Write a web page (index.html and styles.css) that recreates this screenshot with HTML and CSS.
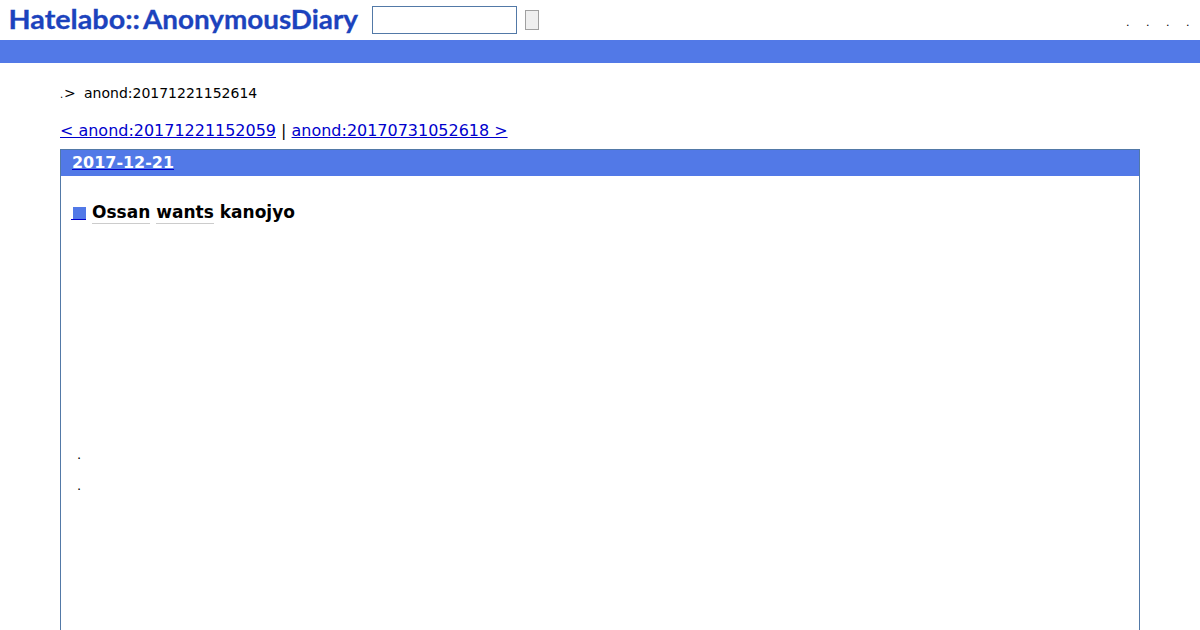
FILE: index.html
```html
<!DOCTYPE html>
<html lang="ja">
<head>
    <meta charset="UTF-8">
    <title>Ossan wants kanojyo</title>
    <link rel="stylesheet" href="styles.css">
</head>
<body>
    <header class="header">
        <a class="logo" href="#">
            <svg width="362" height="40" viewBox="0 0 362 40">
                <text x="8.5" y="28.5" textLength="131.5" lengthAdjust="spacingAndGlyphs">Hatelabo::</text>
                <text x="143" y="28.5" textLength="215" lengthAdjust="spacingAndGlyphs">AnonymousDiary</text>
            </svg>
        </a>
        <form class="search">
            <input class="search-word" type="text">
            <button class="search-button" type="button"></button>
        </form>
        <ul class="menu">
            <li>.</li>
            <li>.</li>
            <li>.</li>
            <li>.</li>
        </ul>
    </header>
    <div class="bar"></div>
    <main class="container">
        <p class="breadcrumbs"><span class="dot">.</span><span class="arrow">&gt;</span><span>anond:20171221152614</span></p>
        <p class="pager"><a href="#">&lt; anond:20171221152059</a> | <a href="#">anond:20170731052618 &gt;</a></p>
        <div class="day">
            <h2 class="date"><a href="#"><span>2017-12-21</span></a></h2>
            <div class="section">
                <h3 class="title"><a class="anchor" href="#"><span class="square"></span></a><span class="keyword">Ossan</span> <span class="keyword">wants</span> kanojyo</h3>
                <ul class="notes">
                    <li>.</li>
                    <li>.</li>
                </ul>
            </div>
        </div>
    </main>
</body>
</html>
```
FILE: styles.css
```css
* {
    box-sizing: border-box;
    margin: 0;
    padding: 0;
}
body {
    height: 630px;
    overflow: hidden;
    background: #fff;
    color: #000;
    font-family: "DejaVu Sans", sans-serif;
    font-size: 15.98px;
}
a {
    color: #0000cc;
}
.header {
    display: flex;
    height: 40px;
}
.logo svg {
    display: block;
}
.logo text {
    fill: #1c43bd;
    stroke: #1c43bd;
    stroke-width: 0.3px;
    font-family: Lato, sans-serif;
    font-size: 26px;
    font-weight: bold;
}
.search {
    display: flex;
    align-items: center;
    gap: 8px;
    padding-left: 10px;
}
.search-word {
    width: 145px;
    height: 28px;
    border: 1px solid #5279a7;
}
.search-button {
    width: 14px;
    height: 20px;
    border: 1px solid #a0a0a0;
    background: #efefef;
}
.menu {
    display: flex;
    margin-left: auto;
    padding: 15px 3px 0 0;
    list-style: none;
    font-size: 11px;
    line-height: 16px;
}
.menu li {
    width: 20px;
    padding-left: 9px;
}
.bar {
    height: 23px;
    background: #5279e7;
}
.container {
    padding: 0 60px;
}
.breadcrumbs {
    display: flex;
    padding-top: 20px;
    font-size: 14px;
    line-height: 20px;
}
.dot {
    width: 4px;
    font-size: 10px;
    line-height: 23px;
}
.arrow {
    width: 20px;
}
.pager {
    padding-top: 15px;
    line-height: 19px;
}
.day {
    height: 500px;
    margin-top: 9px;
    border: 1px solid #5279a7;
}
.date {
    height: 26px;
    padding-left: 11px;
    background: #5279e7;
    font-size: 15.96px;
    line-height: 25px;
}
.date span {
    color: #fff;
}
.section {
    padding: 26px 10px;
}
.title {
    display: flex;
    gap: 6px;
    font-size: 17px;
    line-height: 21px;
}
.anchor {
    width: 15px;
    height: 13px;
    margin-top: 5px;
    border-bottom: 1px solid #0000cc;
}
.square {
    display: block;
    width: 13px;
    height: 12px;
    margin-left: 2px;
    background: #5279e7;
}
.keyword {
    height: 22px;
    border-bottom: 1px solid #ccc;
}
.notes {
    padding: 215px 0 0 6px;
    list-style: none;
    font-size: 13px;
    line-height: 31px;
}
```
